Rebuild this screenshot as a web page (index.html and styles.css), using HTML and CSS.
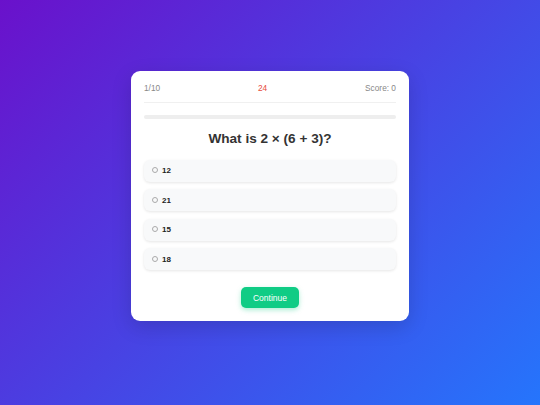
FILE: index.html
```html
<!DOCTYPE html>
<html>
<head>
<meta charset="utf-8">
<link rel="stylesheet" href="styles.css">
</head>
<body>
<div class="page">
  <div class="card">
    <div class="header">
      <span class="count">1/10</span>
      <span class="timer">24</span>
      <span class="score">Score: 0</span>
    </div>
    <div class="progress"><div class="fill" style="width:0%"></div></div>
    <h2 class="question">What is 2 × (6 + 3)?</h2>
    <div class="options">
      <label class="option"><span class="radio"></span><span class="label">12</span></label>
      <label class="option"><span class="radio"></span><span class="label">21</span></label>
      <label class="option"><span class="radio"></span><span class="label">15</span></label>
      <label class="option"><span class="radio"></span><span class="label">18</span></label>
    </div>
    <div class="actions"><button class="btn">Continue</button></div>
  </div>
</div>
</body>
</html>
```

FILE: styles.css
```css
html, body {
  margin: 0;
  padding: 0;
  height: 100%;
}
body {
  font-family: "Liberation Sans", Arial, sans-serif;
  background: linear-gradient(135deg, #6a11cb 0%, #2575fc 100%);
}
.page {
  box-sizing: border-box;
  height: 405px;
  display: flex;
  align-items: center;
  justify-content: center;
  padding-bottom: 13px;
}
.card {
  box-sizing: border-box;
  width: 278px;
  height: 250px;
  background: #fff;
  border-radius: 9px;
  padding: 12px 13px 13px;
  box-shadow: 0 6px 20px rgba(0, 0, 0, 0.15);
  display: flex;
  flex-direction: column;
}
.header {
  display: flex;
  justify-content: space-between;
  font-size: 8.3px;
  line-height: 11px;
  color: #888;
  padding-bottom: 8px;
  border-bottom: 1px solid #f0f0f0;
}
.timer {
  color: #e74c3c;
}
.progress {
  margin-top: 12px;
  height: 4px;
  background: #eee;
  border-radius: 2px;
  overflow: hidden;
}
.fill {
  height: 100%;
  background: #10cc85;
}
.question {
  margin: 11px 0 12px;
  font-size: 13.6px;
  line-height: 18px;
  font-weight: bold;
  color: #333;
  text-align: center;
}
.options {
  display: flex;
  flex-direction: column;
  gap: 7.5px;
}
.option {
  height: 22px;
  display: flex;
  align-items: center;
  padding: 0 8px;
  background: #f8f9fa;
  border-radius: 6px;
  box-shadow: 0 1px 3px rgba(0, 0, 0, 0.1);
  font-size: 8px;
  color: #111;
}
.radio {
  box-sizing: border-box;
  width: 6px;
  height: 6px;
  border: 1px solid #aaa;
  border-radius: 50%;
  margin-right: 4px;
  margin-top: -1px;
}
.label {
  font-weight: bold;
  color: #222;
}
.actions {
  margin-top: 17px;
  display: flex;
  justify-content: center;
}
.btn {
  width: 58px;
  height: 21px;
  border: none;
  border-radius: 5px;
  background: #10cc85;
  color: #fff;
  font-family: "Liberation Sans", Arial, sans-serif;
  font-size: 8.5px;
  padding: 0;
  box-shadow: 0 2px 5px rgba(16, 204, 133, 0.35);
}
```
